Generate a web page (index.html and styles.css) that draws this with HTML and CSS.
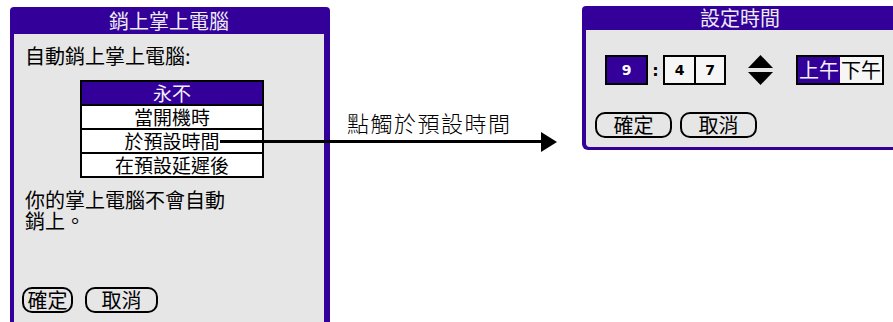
FILE: index.html
```html
<!DOCTYPE html>
<html lang="zh-Hant">
<head>
    <meta charset="UTF-8">
    <title>銷上掌上電腦</title>
    <link rel="stylesheet" href="styles.css">
</head>
<body>
    <div class="stage">
        <div class="win win-lock">
            <div class="win-title">銷上掌上電腦</div>
            <div class="win-body">
                <p class="label">自動銷上掌上電腦:</p>
                <ul class="choices">
                    <li class="selected">永不</li>
                    <li>當開機時</li>
                    <li>於預設時間</li>
                    <li>在預設延遲後</li>
                </ul>
                <p class="note">你的掌上電腦不會自動<br>銷上。</p>
                <div class="buttons">
                    <span class="btn btn-ok">確定</span>
                    <span class="btn btn-cancel">取消</span>
                </div>
            </div>
        </div>

        <div class="caption">點觸於預設時間</div>

        <div class="win win-time">
            <div class="win-title">設定時間</div>
            <div class="win-body">
                <div class="time-row">
                    <span class="cell hour">9</span>
                    <span class="colon">:</span>
                    <span class="minutes">
                        <span class="cell">4</span>
                        <span class="cell">7</span>
                    </span>
                    <svg class="spinner" width="25" height="30" viewBox="0 0 25 30">
                        <polygon points="12.5,0 25,13 0,13" fill="#000"/>
                        <polygon points="0,17 25,17 12.5,30" fill="#000"/>
                    </svg>
                    <span class="ampm">
                        <span class="half on">上午</span>
                        <span class="half">下午</span>
                    </span>
                </div>
                <div class="buttons">
                    <span class="btn btn-wide">確定</span>
                    <span class="btn btn-wide">取消</span>
                </div>
            </div>
        </div>

        <svg class="pointer" width="340" height="22" viewBox="0 0 340 22">
            <rect x="0" y="8" width="325" height="3" fill="#000"/>
            <polygon points="321,0 337,10 321,20" fill="#000"/>
        </svg>
    </div>
</body>
</html>
```

FILE: styles.css
```css
* {
    padding: 0;
    margin: 0;
}

html,
body {
    background: #fff;
    overflow: hidden;
}

body {
    width: 893px;
    height: 322px;
    font-family: "Noto Sans CJK TC", "Noto Sans", sans-serif;
    color: #000;
}

li {
    list-style: none;
}

.stage {
    position: relative;
    display: flex;
    align-items: flex-start;
    padding: 6px 0 0 10px;
}

/* palm windows */
.win {
    flex: none;
    display: flex;
    flex-direction: column;
    background: #330099;
    border-radius: 4px 4px 0 0;
}

.win-title {
    color: #ecebf4;
    text-align: center;
    font-size: 20px;
}

.win-body {
    flex: 1;
    background: #e6e6e6;
}

.win-lock {
    width: 320px;
    height: 330px;
    margin-top: 1px;
    padding: 0 6px 0 4px;
    box-sizing: border-box;
}

.win-lock .win-title {
    height: 27px;
    line-height: 27px;
}

.win-lock .win-body {
    padding: 10px 0 0 11px;
}

.label {
    font-size: 20px;
    line-height: 24px;
}

.choices {
    width: 184px;
    margin: 12px 0 0 55px;
    border: 2px solid #000;
    background: #fff;
    box-sizing: border-box;
}

.choices li {
    height: 22px;
    line-height: 22px;
    font-size: 19px;
    text-align: center;
    border-top: 2px solid #000;
}

.choices li:first-child {
    border-top: 0;
}

.choices .selected {
    background: #330099;
    color: #f0f0f8;
}

.note {
    margin-top: 11px;
    font-size: 20px;
    line-height: 21px;
}

.buttons {
    display: flex;
    gap: 12px;
}

.win-lock .buttons {
    margin: 56px 0 0 -3px;
}

.btn {
    display: block;
    height: 26px;
    line-height: 22px;
    font-size: 20px;
    border: 2px solid #000;
    border-radius: 10px;
    box-sizing: border-box;
    text-align: center;
}

.btn-ok {
    width: 51px;
}

.btn-cancel {
    width: 73px;
}

/* caption between the windows */
.caption {
    flex: none;
    width: 235px;
    margin: 101px 0 0 17px;
    font-size: 22px;
    font-weight: 300;
    letter-spacing: 1.5px;
    line-height: 30px;
}

.win-time {
    width: 316px;
    height: 144px;
    padding: 0 0 3px 4px;
    box-sizing: border-box;
    border-radius: 4px 4px 0 6px;
}

.win-time .win-title {
    height: 24px;
    line-height: 24px;
    padding-right: 4px;
}

.win-time .win-body {
    padding: 25px 0 0 19px;
    border-bottom-left-radius: 4px;
}

.time-row {
    display: flex;
    align-items: center;
    height: 30px;
}

.cell {
    display: block;
    height: 30px;
    line-height: 26px;
    border: 2px solid #000;
    box-sizing: border-box;
    text-align: center;
    font-family: "DejaVu Sans", sans-serif;
    font-weight: bold;
    font-size: 14px;
    background: #f6f6f6;
}

.hour {
    width: 43px;
    background: #330099;
    color: #fff;
}

.colon {
    width: 15px;
    text-align: center;
    font-family: "DejaVu Sans", sans-serif;
    font-weight: bold;
    font-size: 16px;
}

.minutes {
    display: flex;
}

.minutes .cell {
    width: 33px;
}

.minutes .cell + .cell {
    border-left: 0;
    width: 30px;
}

.spinner {
    margin-left: 22px;
}

.ampm {
    display: flex;
    margin-left: 23px;
    border: 2px solid #000;
    height: 30px;
    box-sizing: border-box;
}

.half {
    display: block;
    width: 42px;
    line-height: 26px;
    font-size: 20px;
    text-align: center;
    background: #f6f6f6;
}

.half.on {
    background: #330099;
    color: #f0f0f8;
}

.win-time .buttons {
    gap: 8px;
    margin: 27px 0 0 -10px;
}

.btn-wide {
    width: 77px;
}

/* connector from the list to the second screen */
.pointer {
    position: absolute;
    left: 220px;
    top: 132px;
}
```
